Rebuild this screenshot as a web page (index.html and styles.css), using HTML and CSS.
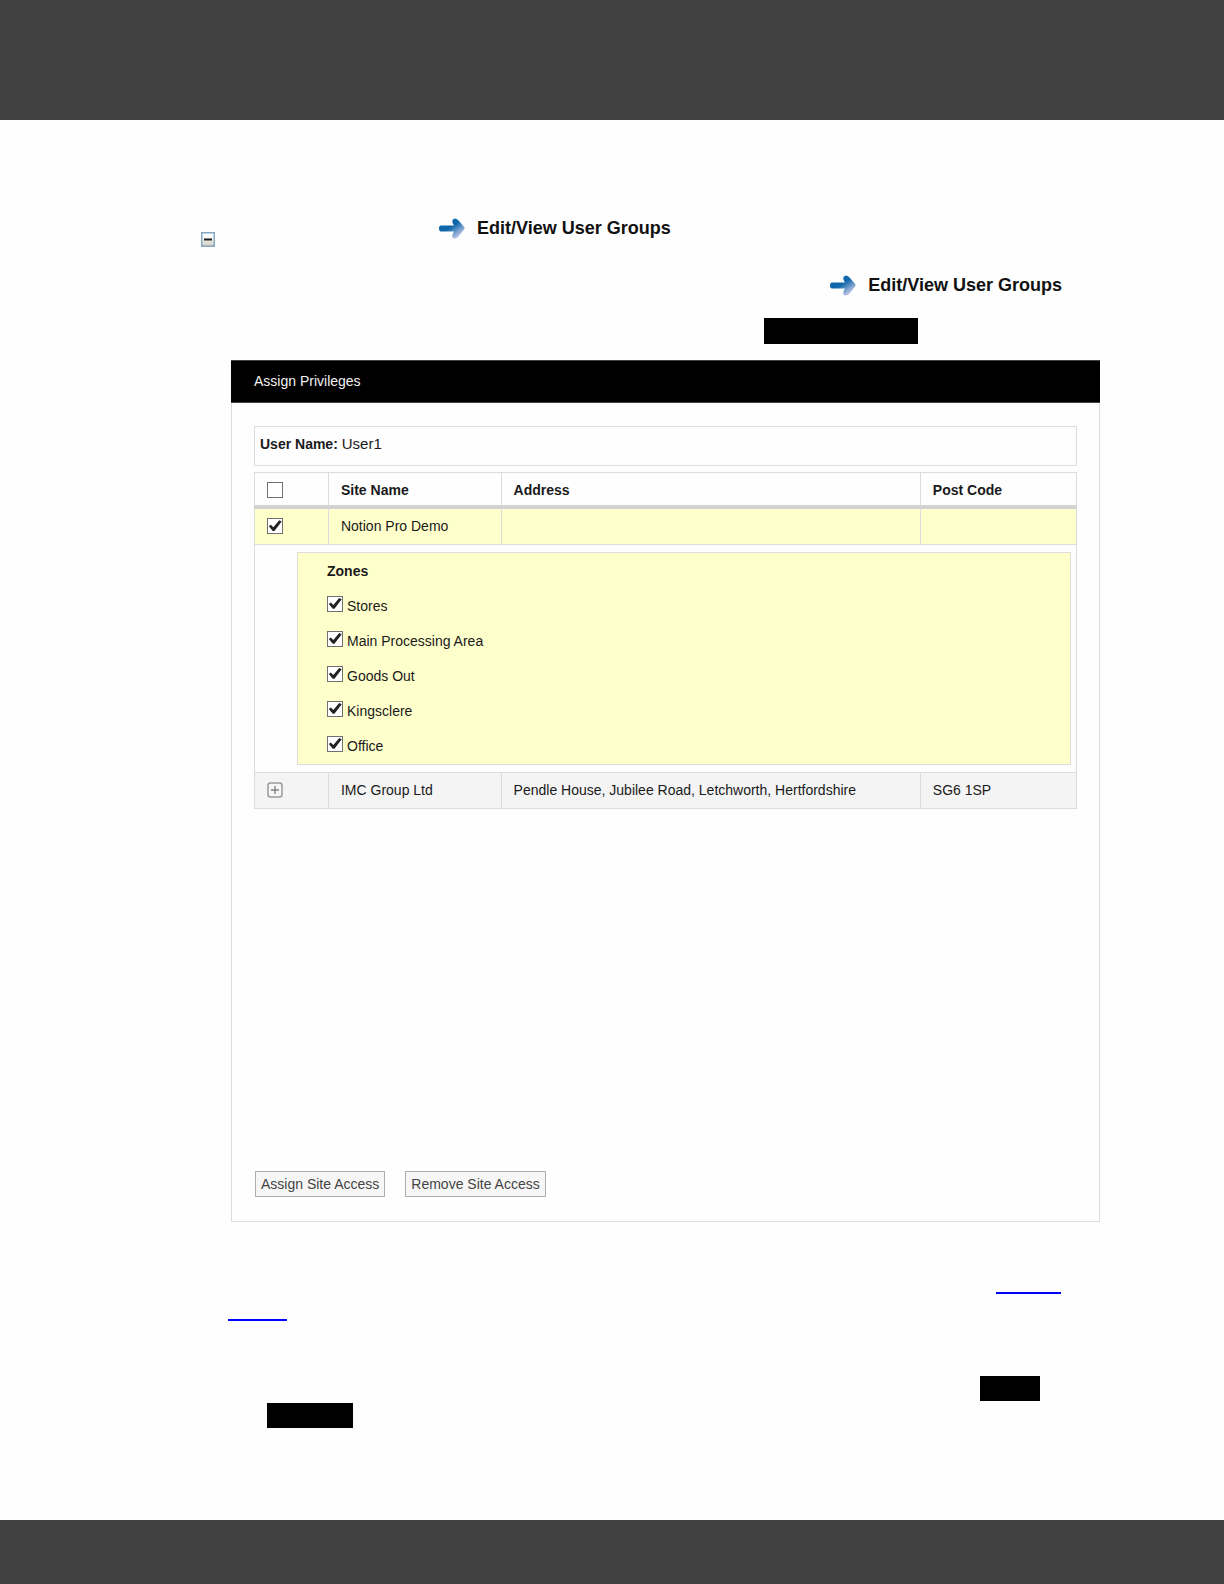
FILE: index.html
```html
<!DOCTYPE html>
<html lang="en">
<head>
    <meta charset="UTF-8">
    <meta name="viewport" content="width=device-width, initial-scale=1.0">
    <title>Assign Privileges</title>
    <link rel="stylesheet" href="styles.css">
</head>
<body>
    <header class="top-bar"></header>

    <main class="page">
        <!-- Menu steps -->
        <div class="step">
            <button type="button" class="collapse-btn" aria-label="Collapse">
                <svg width="14" height="15" viewBox="0 0 14 15">
                    <defs>
                        <linearGradient id="box" x1="0" y1="0" x2="0" y2="1">
                            <stop offset="0.3" stop-color="#ffffff"/>
                            <stop offset="1" stop-color="#cfcabc"/>
                        </linearGradient>
                    </defs>
                    <rect x="0.75" y="0.75" width="12.500" height="13.500" fill="url(#box)" stroke="#85a9c4" stroke-width="1.500"/>
                    <rect x="3" y="6.500" width="8" height="2" fill="#1c1c1c"/>
                </svg>
            </button>
            <a href="#" class="menu-link">
                <svg class="arrow" width="26" height="21" viewBox="0 0 26 21">
                    <defs>
                        <linearGradient id="blue" gradientUnits="userSpaceOnUse" x1="11" y1="4" x2="20" y2="17">
                            <stop offset="0.3" stop-color="#0f67ab"/>
                            <stop offset="1" stop-color="#b3c0e2"/>
                        </linearGradient>
                    </defs>
                    <path d="M2 7.500H15L13.500 5Q12.500 1 16 0.500Q18 0.500 20 3L25.500 9.500V11L19.500 18.500Q17.500 21 15 20.500Q12.500 19.500 13.500 16.500L15 13.500H2Q0 13.500 0 10.500Q0 7.500 2 7.500Z" fill="url(#blue)"/>
                </svg>
                Edit/View User Groups
            </a>
        </div>
        <div class="step step-right">
            <a href="#" class="menu-link">
                <svg class="arrow" width="26" height="21" viewBox="0 0 26 21">
                    <path d="M2 7.500H15L13.500 5Q12.500 1 16 0.500Q18 0.500 20 3L25.500 9.500V11L19.500 18.500Q17.500 21 15 20.500Q12.500 19.500 13.500 16.500L15 13.500H2Q0 13.500 0 10.500Q0 7.500 2 7.500Z" fill="url(#blue)"/>
                </svg>
                Edit/View User Groups
            </a>
        </div>
        <div class="block-row block-row-top">
            <span class="block block-large"></span>
        </div>

        <!-- Privileges panel -->
        <section class="panel">
            <h1 class="panel-title">Assign Privileges</h1>
            <div class="panel-body">
                <div class="user-box"><strong>User Name:</strong> <span class="user-value">User1</span></div>

                <table class="sites">
                    <thead>
                        <tr>
                            <th class="col-check"><input type="checkbox" class="check" aria-label="Select all sites"></th>
                            <th class="col-site">Site Name</th>
                            <th class="col-address">Address</th>
                            <th class="col-post">Post Code</th>
                        </tr>
                    </thead>
                    <tbody>
                        <tr class="selected">
                            <td><input type="checkbox" class="check" aria-label="Notion Pro Demo" checked></td>
                            <td>Notion Pro Demo</td>
                            <td></td>
                            <td></td>
                        </tr>
                        <tr class="zones-row">
                            <td colspan="4">
                                <div class="zones">
                                    <h2>Zones</h2>
                                    <label><input type="checkbox" class="check" checked>Stores</label>
                                    <label><input type="checkbox" class="check" checked>Main Processing Area</label>
                                    <label><input type="checkbox" class="check" checked>Goods Out</label>
                                    <label><input type="checkbox" class="check" checked>Kingsclere</label>
                                    <label><input type="checkbox" class="check" checked>Office</label>
                                </div>
                            </td>
                        </tr>
                        <tr class="alt">
                            <td>
                                <button type="button" class="expand-btn" aria-label="Expand">
                                    <svg width="16" height="16" viewBox="0 0 16 16">
                                        <rect x="1" y="1" width="14" height="14" rx="2.500" fill="#f6f6f6" stroke="#999999" stroke-width="1.500"/>
                                        <path d="M4 8H12M8 4V12" stroke="#808080" stroke-width="1.300"/>
                                    </svg>
                                </button>
                            </td>
                            <td>IMC Group Ltd</td>
                            <td>Pendle House, Jubilee Road, Letchworth, Hertfordshire</td>
                            <td>SG6 1SP</td>
                        </tr>
                    </tbody>
                </table>

                <div class="actions">
                    <button type="button">Assign Site Access</button>
                    <button type="button">Remove Site Access</button>
                </div>
            </div>
        </section>

        <!-- Links and blocks under the panel -->
        <div class="link-row link-row-right"><a href="#" class="line-link line-long" aria-label="Link"></a></div>
        <div class="link-row"><a href="#" class="line-link line-short" aria-label="Link"></a></div>
        <div class="block-row block-row-right"><span class="block block-small"></span></div>
        <div class="block-row block-row-left"><span class="block block-medium"></span></div>
    </main>

    <footer class="bottom-bar"></footer>
</body>
</html>
```
FILE: styles.css
```css
* {
    box-sizing: border-box;
}

body {
    display: flex;
    flex-direction: column;
    min-height: 100vh;
    margin: 0;
    background-color: #fefefe;
    color: #1a1a1a;
    font-family: "Liberation Sans", Arial, sans-serif;
    font-size: 14px;
    line-height: 16px;
}

button {
    font: inherit;
    cursor: pointer;
}

.top-bar {
    height: 120px;
    background-color: #414141;
}

.bottom-bar {
    height: 64px;
    background-color: #414141;
}

.page {
    flex: 1;
    padding: 98px 124px 0 201px;
}

/* Menu steps */
.step {
    display: flex;
    align-items: flex-start;
    gap: 224px;
    height: 29px;
}

.step-right {
    justify-content: flex-end;
    margin-top: 28px;
    padding-right: 38px;
}

.collapse-btn,
.expand-btn {
    display: block;
    padding: 0;
    border: 0;
    background: none;
}

.collapse-btn {
    align-self: flex-end;
}

.collapse-btn svg,
.expand-btn svg {
    display: block;
}

.menu-link {
    display: flex;
    align-items: flex-start;
    gap: 12px;
    color: #111;
    font-size: 18px;
    font-weight: bold;
    line-height: 20px;
    text-decoration: none;
}

/* Solid blocks */
.block-row {
    display: flex;
}

.block-row-top {
    justify-content: flex-end;
    margin: 14px 0 16px;
    padding-right: 182px;
}

.block-row-right {
    justify-content: flex-end;
    margin-top: 55px;
    padding-right: 60px;
}

.block-row-left {
    margin-top: 2px;
    padding-left: 66px;
}

.block {
    height: 25px;
    background-color: #000;
}

.block-large {
    width: 154px;
    height: 26px;
}

.block-medium {
    width: 86px;
}

.block-small {
    width: 60px;
}

/* Panel */
.panel {
    margin-left: 30px;
    border: 1px solid #dcdcdc;
    border-top: 0;
}

.panel-title {
    margin: 0 -1px;
    padding: 13px 23px;
    border: 1px solid #444;
    border-width: 1px 0;
    background-color: #000;
    color: #f2f2f2;
    font-size: 14px;
    font-weight: normal;
    line-height: 15px;
}

.panel-body {
    padding: 23px 22px 24px;
}

.user-box {
    height: 40px;
    padding: 9px 5px;
    border: 1px solid #dcdcdc;
}

.user-value {
    font-size: 15px;
}

/* Site table */
.sites {
    width: 100%;
    margin-top: 6px;
    border-collapse: collapse;
    table-layout: fixed;
}

.sites th,
.sites td {
    height: 36px;
    padding: 0 12px;
    border: 1px solid #dcdcdc;
    text-align: left;
}

.sites th {
    height: 34px;
    padding-top: 2px;
    border-bottom: 4px solid #d2d2d2;
}

.col-check {
    width: 9%;
}

.col-site {
    width: 21%;
}

.col-address {
    width: 51%;
}

.selected {
    background-color: #ffffcc;
}

.sites .selected td {
    height: 38px;
}

.alt {
    background-color: #f4f4f4;
}

.sites .alt td {
    padding-bottom: 2px;
}

.sites .zones-row td {
    padding: 7px 5px 7px 42px;
}

.zones {
    padding: 10px 29px;
    border: 1px solid #dcdcdc;
    background-color: #ffffcc;
}

.zones h2 {
    margin: 0 0 17px;
    font-size: 14px;
    line-height: 16px;
}

.zones label {
    display: flex;
    align-items: flex-end;
    gap: 4px;
    height: 18px;
}

.zones label + label {
    margin-top: 17px;
}

.zones .check {
    align-self: flex-start;
}

/* Checkbox */
.check {
    display: block;
    width: 16px;
    height: 16px;
    margin: 0;
    border: 1px solid #707070;
    background-color: #fff;
    appearance: none;
}

.check:checked::before {
    content: "";
    display: block;
    width: 14px;
    height: 14px;
    background-color: #222;
    clip-path: polygon(6% 50%, 20% 40%, 38% 58%, 80% 8%, 98% 16%, 46% 84%, 34% 84%);
}

/* Buttons */
.actions {
    display: flex;
    gap: 20px;
    margin-top: 362px;
    padding-left: 1px;
}

.actions button {
    height: 26px;
    padding: 0 5px;
    border: 1px solid #adadad;
    background-color: #f6f6f6;
    color: #444;
}

/* Underlined links */
.link-row {
    display: flex;
    height: 27px;
    padding-left: 27px;
}

.link-row-right {
    justify-content: flex-end;
    margin-top: 45px;
    padding-right: 39px;
}

.line-link {
    border-bottom: 2px solid #0000ff;
}

.line-long {
    width: 65px;
}

.line-short {
    width: 59px;
}
```
